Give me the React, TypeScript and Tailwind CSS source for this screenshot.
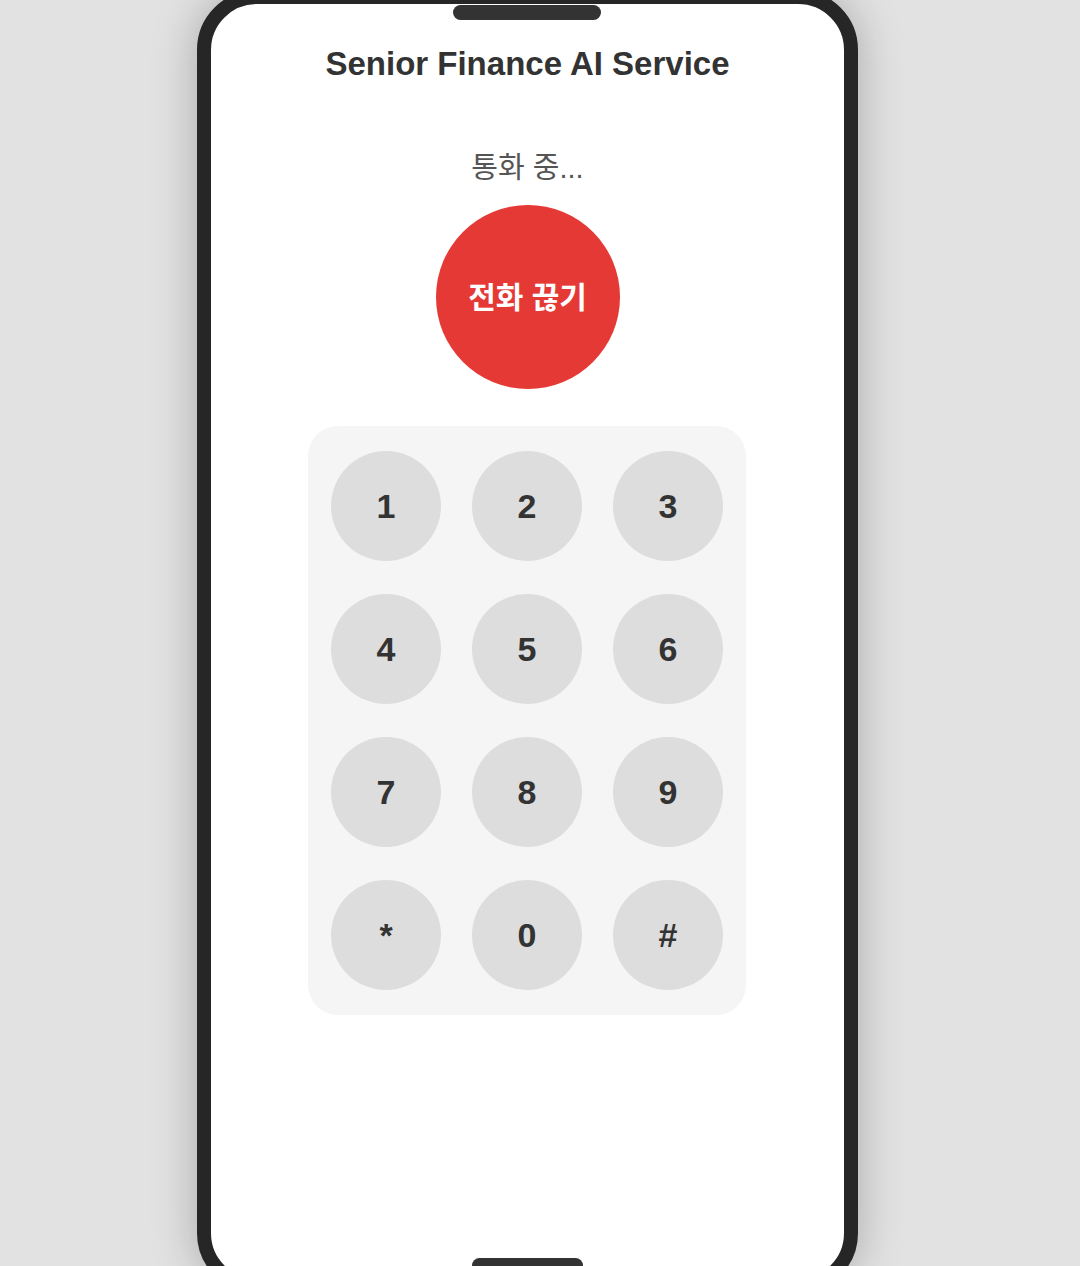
const keys = ["1", "2", "3", "4", "5", "6", "7", "8", "9", "*", "0", "#"];

export default function App() {
  return (
    <div
      className="h-[1266px] w-full overflow-hidden bg-[#e2e2e2] flex pl-[197px]"
      style={{ fontFamily: '"Liberation Sans", "Noto Sans CJK KR", sans-serif' }}
    >
      <div className="relative mt-[-10px] h-[1303px] w-[661px] shrink-0 rounded-[60px] border-[14px] border-[#262626] bg-white shadow-[0_0_45px_rgba(0,0,0,0.25)]">
        {/* notch bars */}
        <div className="absolute left-[242px] top-[1px] h-[15px] w-[148px] rounded-full bg-[#333]" />
        <div className="absolute bottom-[6px] left-[261px] h-[15px] w-[111px] rounded-full bg-[#333]" />

        <div className="flex flex-col items-center pt-[40px]">
          <h1 className="text-[33px] leading-[40px] font-bold text-[#333]">
            Senior Finance AI Service
          </h1>

          <p className="mt-[67px] text-[29px] leading-[34px] text-[#555]">
            통화 중...
          </p>

          <button className="mt-[20px] flex h-[184px] w-[184px] items-center justify-center rounded-full bg-[#e53935] text-[30px] font-bold text-white">
            전화 끊기
          </button>

          <div className="mt-[37px] ml-[-1px] grid grid-cols-3 gap-x-[31px] gap-y-[33px] rounded-[30px] bg-[#f5f5f5] px-[23px] pt-[25px] pb-[25px]">
            {keys.map((k) => (
              <button
                key={k}
                className="flex h-[110px] w-[110px] items-center justify-center rounded-full bg-[#dddddd] text-[34px] font-bold text-[#333]"
              >
                {k}
              </button>
            ))}
          </div>
        </div>
      </div>
    </div>
  );
}
